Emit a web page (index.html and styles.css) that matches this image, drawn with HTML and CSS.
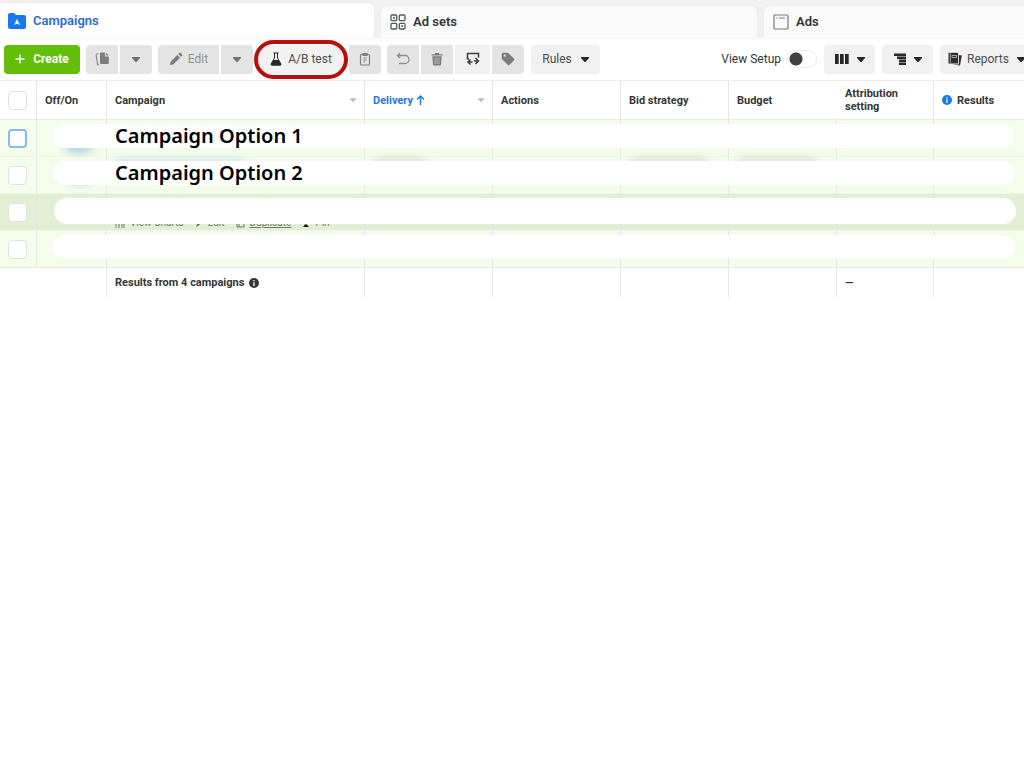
FILE: index.html
```html
<!DOCTYPE html>
<html lang="en">
<head>
<meta charset="utf-8">
<title>Ads Manager – Campaigns</title>
<link rel="stylesheet" href="styles.css">
</head>
<body>
<nav class="tabs">
  <a class="tab tab-active" href="#campaigns">
    <svg width="18" height="16" viewBox="0 0 18 16"><path d="M0 2Q0 0 2 0H6L8 2H16Q18 2 18 4V14Q18 16 16 16H2Q0 16 0 14Z" fill="#1877f2"/><path d="M9 6L12 12L9 10.800L6 12Z" fill="#fff"/></svg>
    Campaigns</a>
  <a class="tab" href="#adsets">
    <svg width="16" height="16" viewBox="0 0 16 16" fill="none" stroke="#555b58" stroke-width="1.300"><rect x="1" y="1" width="5.700" height="5.700" rx="1"/><rect x="9.300" y="1" width="5.700" height="5.700" rx="1"/><rect x="1" y="9.300" width="5.700" height="5.700" rx="1"/><rect x="9.300" y="9.300" width="5.700" height="5.700" rx="1"/><path d="M3 3.850H4.700M11.300 12.150H13" stroke-width="1.700"/></svg>
    Ad sets</a>
  <a class="tab" href="#ads">
    <svg width="16" height="16" viewBox="0 0 16 16" fill="none" stroke="#777c78" stroke-width="1.200"><rect x="1" y="1" width="14" height="14" rx="1"/><path d="M3 4H4M5.500 4H12"/></svg>
    Ads</a>
</nav>

<div class="toolbar">
  <button class="btn create"><svg width="10" height="10" viewBox="0 0 10 10" stroke="#fff" stroke-width="1.300"><path d="M5 .5V9.500M.5 5H9.500"/></svg>Create</button>
  <div class="group">
    <button class="btn muted icon" aria-label="Duplicate"><svg width="14" height="14" viewBox="0 0 14 14" fill="#7a7d79"><path d="M6 .5H10V4.500H13.800V11Q13.800 12 12.800 12H6Q5 12 5 11V1.500Q5 .5 6 .5ZM11 .8L13.500 3.500H11Z"/><path d="M3.500 1.500L1 2.500L2.500 12.500L4 12.800" fill="none" stroke="#7a7d79"/></svg></button>
    <button class="btn muted icon" aria-label="Duplicate options"><svg class="caret" viewBox="0 0 8 5"><path d="M0 0H8V1L4.500 5H3.500L0 1Z"/></svg></button>
  </div>
  <div class="group">
    <button class="btn muted edit"><svg width="14" height="14" viewBox="0 0 14 14" fill="#7a7d79"><path d="M1 13L1.500 9.800L8.300 3L11 5.700L4.200 12.500ZM9.200 2.100L10.500 .8Q11 .4 11.500 .8L13.200 2.500Q13.600 3 13.200 3.500L11.900 4.800Z"/></svg>Edit</button>
    <button class="btn muted icon" aria-label="Edit options"><svg class="caret" viewBox="0 0 8 5"><path d="M0 0H8V1L4.500 5H3.500L0 1Z"/></svg></button>
  </div>
  <div class="group">
    <button class="btn abtest"><svg width="12" height="14" viewBox="0 0 12 14"><path d="M3.500 1H8.500M4.500 1V6L1 12Q.8 13 2 13H10Q11.200 13 11 12L7.500 6V1" fill="none" stroke="#252826"/><path d="M3.500 8H8.500L11 12.200Q11 13.500 10 13.500H2Q1 13.500 1 12.200Z" fill="#252826"/></svg>A/B test</button>
    <button class="btn muted icon" aria-label="Paste"><svg width="12" height="14" viewBox="0 0 12 14" fill="none" stroke="#7f827f" stroke-width="1.200"><rect x="1.500" y="2.500" width="9" height="10.500" rx="1"/><path d="M4 1.500H8V3.500H4ZM4.500 6H7.500M4.500 8H7.500M4.500 10H6"/></svg></button>
  </div>
  <div class="group tools">
    <button class="btn muted icon" aria-label="Undo"><svg width="14" height="14" viewBox="0 0 14 14" fill="none" stroke="#8a8d89" stroke-width="1.300"><path d="M4 1L1.500 3.500L4 6M1.500 3.500H9A4 4 0 0 1 9 11.500H3"/></svg></button>
    <button class="btn muted icon" aria-label="Delete"><svg width="12" height="14" viewBox="0 0 12 14" fill="#7a7d79"><path d="M.5 2.200H4V1H8V2.200H11.500V3.600H.5Z"/><path d="M1.300 4.300H10.700L10 12.500Q10 13.500 9 13.500H3Q2 13.500 2 12.500Z"/><path d="M4 5.500V12M6 5.500V12M8 5.500V12" stroke="#c8c9c7" stroke-width=".8"/></svg></button>
    <button class="btn swap" aria-label="Export and import"><svg width="14" height="14" viewBox="0 0 14 14" fill="none" stroke="#3c403d" stroke-width="1.500"><path d="M3 7H1.500V1.500H12.500V5.500M4.500 7.500L2 10L4.500 12.500M9.500 6L12.500 9L9.500 12M2.500 10H6.500M8 9H12"/></svg></button>
    <button class="btn muted icon" aria-label="Tag"><svg width="14" height="14" viewBox="0 0 14 14"><path d="M.8 2Q.8 .8 2 .8H7L13 6.800Q13.700 7.500 13 8.200L8.500 12.900Q7.800 13.500 7 12.900L.8 7Z" fill="#7a7d79"/><circle cx="3.700" cy="3.700" r="1.100" fill="#e4e4e4"/></svg></button>
  </div>
  <button class="btn rules">Rules<svg class="caret dark" viewBox="0 0 8 5"><path d="M0 0H8V1L4.500 5H3.500L0 1Z"/></svg></button>
  <div class="views">
    <label class="setup">View Setup<input class="switch" type="checkbox"></label>
    <button class="btn view" aria-label="Columns"><svg width="14" height="12" viewBox="0 0 14 12" fill="#252826"><path d="M0 1H3.700V11H0ZM5 1H8.700V11H5ZM10 1H13.700V11H10Z"/></svg><svg class="caret dark" viewBox="0 0 8 5"><path d="M0 0H8V1L4.500 5H3.500L0 1Z"/></svg></button>
    <button class="btn view" aria-label="Breakdown"><svg width="12" height="12" viewBox="0 0 12 12" fill="#252826"><path d="M0 .5H12V3H0ZM3 3.500H12V6H3ZM5 6.500H12V9H5ZM5 9.500H12V12H5Z"/></svg><svg class="caret dark" viewBox="0 0 8 5"><path d="M0 0H8V1L4.500 5H3.500L0 1Z"/></svg></button>
    <button class="btn reports"><svg width="14" height="14" viewBox="0 0 14 14" fill="#2c302d"><path d="M.5 .8H10V11.500H.5Z"/><path d="M10.800 3L13.800 3.500L12 13.500L4 12.500H10.800Z"/><path d="M2.300 1V11M4 3.500H8.500V5.500H4Z" fill="none" stroke="#f1f1f1" stroke-width=".6"/></svg>Reports<svg class="caret dark" viewBox="0 0 8 5"><path d="M0 0H8V1L4.500 5H3.500L0 1Z"/></svg></button>
  </div>
</div>

<table class="grid">
  <colgroup><col class="c-check"><col class="c-toggle"><col class="c-name"><col class="c-std"><col class="c-std"><col class="c-bid"><col class="c-bid"><col class="c-attr"><col></colgroup>
  <thead>
    <tr>
      <th><input class="check" type="checkbox" aria-label="Select all"></th>
      <th>Off/On</th>
      <th><div class="head">Campaign<svg class="caret sort" viewBox="0 0 8 5"><path d="M0 0H8V1L4.500 5H3.500L0 1Z"/></svg></div></th>
      <th><div class="head sorted"><span>Delivery <svg width="9" height="10" viewBox="0 0 9 10" fill="none" stroke="#1877f2" stroke-width="1.400"><path d="M4.500 10V1M1 4.500L4.500 1L8 4.500"/></svg></span><svg class="caret sort" viewBox="0 0 8 5"><path d="M0 0H8V1L4.500 5H3.500L0 1Z"/></svg></div></th>
      <th>Actions</th>
      <th>Bid strategy</th>
      <th class="no-line">Budget</th>
      <th>Attribution setting</th>
      <th><span class="info-head"><svg width="10" height="10" viewBox="0 0 10 10"><circle cx="5" cy="5" r="5" fill="#1877f2"/><path d="M5 2V3.300M5 4.300V8" stroke="#fff" stroke-width="1.300"/></svg>Results</span></th>
    </tr>
  </thead>
  <tbody>
    <tr>
      <td><input class="check focus" type="checkbox" aria-label="Select Campaign Option 1"></td>
      <td><span class="haze blue"></span><span class="pill"></span></td>
      <td><span class="name">Campaign Option 1</span></td>
      <td></td><td></td><td></td><td></td><td></td><td></td>
    </tr>
    <tr>
      <td><input class="check" type="checkbox" aria-label="Select Campaign Option 2"></td>
      <td><span class="haze toggle"></span><span class="pill"></span></td>
      <td><span class="haze link"></span><span class="name">Campaign Option 2</span></td>
      <td><span class="haze"></span></td><td></td><td><span class="haze wide"></span></td><td><span class="haze wide"></span></td><td></td><td></td>
    </tr>
    <tr class="hover">
      <td><input class="check" type="checkbox" aria-label="Select campaign 3"></td>
      <td><span class="pill"></span></td>
      <td><div class="actions"><svg width="10" height="9" viewBox="0 0 10 9" stroke="#6f786a"><path d="M1 9V4M4 9V2M7 9V5M9 9V1"/></svg><a href="#charts">View Charts</a><svg width="8" height="8" viewBox="0 0 8 8" fill="#6f786a"><path d="M1 8L2 5L6 1L8 3L3 7Z"/></svg><a href="#edit">Edit</a><svg width="9" height="9" viewBox="0 0 9 9" fill="none" stroke="#6f786a"><path d="M3 1H8V8H3ZM1 3V8H3"/></svg><a class="dup" href="#duplicate">Duplicate</a><svg width="8" height="9" viewBox="0 0 8 9" stroke="#6f786a"><path d="M1 8L4 5L7 8M3 1V6"/></svg><a href="#pin">Pin</a></div></td>
      <td></td><td></td><td></td><td></td><td></td><td></td>
    </tr>
    <tr>
      <td><input class="check" type="checkbox" aria-label="Select campaign 4"></td>
      <td><span class="pill"></span></td>
      <td></td><td></td><td></td><td></td><td></td><td></td><td></td>
    </tr>
  </tbody>
  <tfoot>
    <tr>
      <td class="no-line"></td><td></td>
      <td><span class="summary">Results from 4 campaigns<svg width="10" height="10" viewBox="0 0 10 10"><circle cx="5" cy="5" r="5" fill="#343735"/><path d="M5 2V3.300M5 4.300V8" stroke="#fff" stroke-width="1.300"/></svg></span></td>
      <td></td><td></td><td></td><td></td><td>—</td><td></td>
    </tr>
  </tfoot>
</table>
</body>
</html>
```

FILE: styles.css
```css
* { box-sizing: border-box; }
body {
  margin: 0;
  background: #fff;
  color: #343735;
  font: 12px/14px Roboto, "Liberation Sans", sans-serif;
  overflow-x: hidden;
}
svg { flex: none; }

.tabs {
  display: grid;
  grid-template-columns: 374fr 376fr 260fr;
  gap: 7px;
  height: 38px;
  align-items: end;
  background: #f1f1f1;
}
.tab {
  display: flex;
  align-items: center;
  gap: 7px;
  height: 32px;
  padding: 0 9px;
  border-radius: 6px 6px 0 0;
  background: #fafafa;
  box-shadow: 0 0 3px #e6e6e6;
  color: #303331;
  font-size: 13px;
  font-weight: 600;
  text-decoration: none;
}
.tab:last-child { border-top-right-radius: 0; }
.tab-active {
  height: 35px;
  padding: 0 8px;
  border-top-left-radius: 0;
  background: #fff;
  color: #2b6bd3;
}

.toolbar {
  display: flex;
  align-items: center;
  gap: 6px;
  height: 42px;
  padding-left: 4px;
  overflow: hidden;
}
.group { display: flex; gap: 2px; }
.group .btn { border-radius: 0; }
.group .btn:first-child { border-radius: 4px 0 0 4px; }
.group .btn:last-child { border-radius: 0 4px 4px 0; }
.btn {
  display: flex;
  align-items: center;
  justify-content: center;
  gap: 9px;
  flex: none;
  height: 29px;
  padding: 0;
  border: 0;
  border-radius: 4px;
  background: #f1f1f1;
  color: #4b4f4d;
  font: inherit;
  white-space: nowrap;
}
.muted { background: #e4e4e4; color: #8d918d; }
.icon { width: 32px; }
.create {
  width: 76px;
  gap: 8px;
  background: #63be09;
  color: #fff;
  font-weight: 700;
}
.edit { width: 61px; gap: 5px; }
.group:has(.abtest) { gap: 5px; margin-left: -1px; }
.group .btn.abtest {
  position: relative;
  width: 86px;
  gap: 6px;
  border-radius: 4px;
}
.abtest::after {
  content: "";
  position: absolute;
  inset: -5px -4px;
  border: 4px solid #b90e0a;
  border-radius: 20px;
}
.swap { width: 35px; }
.rules { width: 69px; margin-left: 1px; }
.caret { width: 8px; height: 5px; fill: #6f726f; }
.caret.dark { fill: #252826; }
.caret.sort { width: 6px; height: 4px; fill: #bcbebc; }
.views {
  display: flex;
  align-items: center;
  gap: 7px;
  margin: 0 -8px 0 auto;
}
.setup { display: flex; align-items: center; gap: 6px; white-space: nowrap; }
.switch {
  appearance: none;
  width: 30px;
  height: 18px;
  margin: 0;
  border: 1px solid #e9e9e9;
  border-radius: 9px;
  background: radial-gradient(circle at 8px 8px, #404142 6px, #fff 7px);
}
.view { width: 51px; gap: 8px; }
.reports { width: 92px; gap: 5px; justify-content: flex-start; padding-left: 8px; }
.reports .caret { margin-left: 3px; }

.grid {
  width: 100%;
  table-layout: fixed;
  border-spacing: 0;
  border-top: 1px solid #ececec;
}
.c-check { width: 37px; }
.c-toggle { width: 70px; }
.c-name { width: 258px; }
.c-std { width: 128px; }
.c-bid { width: 108px; }
.c-attr { width: 97px; }
th, td {
  padding: 0 8px;
  border-right: 1px solid #e6e6e8;
  border-bottom: 1px solid #e7ebe4;
  text-align: left;
}
th { height: 39px; font-size: 11px; line-height: 13px; font-weight: 700; }
tr > :last-child { border-right: 0; }
tr > .no-line { border-right-color: transparent; }
.head { display: flex; align-items: center; justify-content: space-between; }
.sorted { color: #1f76e8; }
.sorted svg:first-child { vertical-align: -1px; }
.info-head, .summary { display: flex; align-items: center; gap: 5px; }

tbody tr { position: relative; background: #f3fdea; }
tbody td { height: 37px; border-bottom-color: #edf5e6; }
tbody tr:last-child td { border-bottom-color: #e4e7e2; }
tbody .hover { background: #e2efd4; }
.check {
  appearance: none;
  display: block;
  width: 19px;
  height: 19px;
  margin: 0;
  border: 1px solid #e2e2e2;
  border-radius: 4px;
  background: #fff;
}
.check.focus { border: 2px solid #8bb9f2; }
.pill {
  position: absolute;
  z-index: 1;
  inset: 4px 9px 9px 53px;
  border-radius: 12px;
  background: #fff;
}
.hover .pill { inset: 4px 8px 7px 54px; border-radius: 14px; }
.name {
  position: relative;
  z-index: 2;
  display: block;
  margin-bottom: 4px;
  color: #000;
  font: 600 20px/24px "Noto Sans", "Open Sans", sans-serif;
  white-space: nowrap;
}
.haze {
  position: absolute;
  top: 1px;
  width: 54px;
  height: 10px;
  border-radius: 5px;
  background: #cfd5c6;
  filter: blur(4px);
  opacity: .7;
}
.haze.wide { width: 80px; }
.haze.blue { top: 20px; left: 66px; width: 26px; height: 13px; background: #8fc0e4; }
.haze.toggle { top: 10px; left: 70px; width: 20px; height: 17px; background: #8fb9da; }
.haze.link { top: 2px; width: 130px; height: 6px; background: #b4d8e0; }
.actions {
  display: flex;
  align-items: center;
  gap: 5px;
  padding-top: 22px;
  font-size: 10px;
  line-height: 12px;
}
.actions a { margin-right: 6px; color: #6f786a; text-decoration: none; }
.actions .dup { text-decoration: underline; }
tfoot td {
  height: 29px;
  border-bottom: 0;
  font-size: 11px;
  font-weight: 700;
}
```
